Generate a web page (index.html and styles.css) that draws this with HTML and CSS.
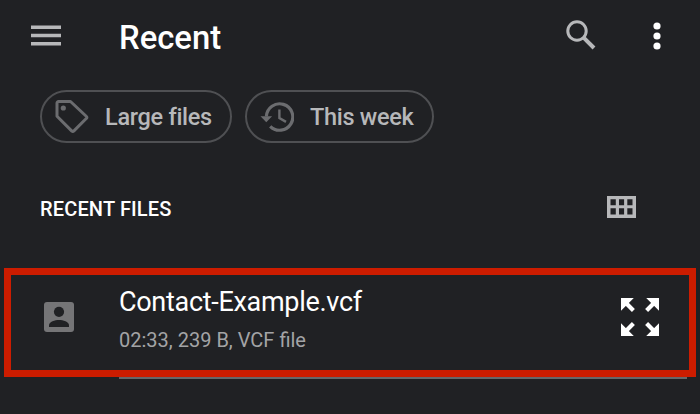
FILE: index.html
```
<!DOCTYPE html>
<html lang="en">
<head>
<meta charset="utf-8">
<title>Recent</title>
<link rel="stylesheet" href="styles.css">
</head>
<body>
<header class="bar">
  <svg class="menu" viewBox="0 0 30 21" fill="#b7b8ba"><path d="M0 .5h30v3.4H0zM0 8.8h30v3.4H0zM0 17h30v3.4H0z"/></svg>
  <h1 class="title">Recent</h1>
  <svg class="search" viewBox="0 0 30 30" fill="none" stroke="#b7b8ba"><circle cx="11" cy="11" r="9.2" stroke-width="3"/><path d="M17.6 17.6L28 28" stroke-width="4"/></svg>
  <svg class="more" viewBox="0 0 8 28" fill="#fff"><circle cx="4" cy="4" r="3.6"/><circle cx="4" cy="14" r="3.6"/><circle cx="4" cy="24" r="3.6"/></svg>
</header>
<nav class="chips">
  <div class="chip chip-large">
    <svg class="chip-icon" viewBox="-1 0 36 36"><path d="M4.5 2.5H16.5L32.5 17.5a1.2 1.2 0 0 1 0 1.8L19.7 32.1a1.2 1.2 0 0 1-1.8 0L3 17.2V4a1.5 1.5 0 0 1 1.5-1.5z" fill="none" stroke="#6b6c6f" stroke-width="3" stroke-linejoin="round"/><circle cx="9.3" cy="9" r="2.6" fill="#6b6c6f"/></svg>
    <span class="label">Large files</span>
  </div>
  <div class="chip chip-week">
    <svg class="chip-icon" viewBox="-1 0 36 36"><path d="M7.4 17.4A13.2 13.2 0 1 1 11.2 27.3" fill="none" stroke="#6b6c6f" stroke-width="3.2"/><path d="M1.5 17.2H13.1L7.3 23.2z" fill="#6b6c6f"/><path d="M20.4 10.5V19L27 22.9" fill="none" stroke="#6b6c6f" stroke-width="2.4"/></svg>
    <span class="label">This week</span>
  </div>
</nav>
<section class="section">
  <h2 class="heading">RECENT FILES</h2>
  <svg class="grid" viewBox="0 0 29 22"><path fill="#b7b8ba" fill-rule="evenodd" d="M0 0h29v22H0zM3.5 3.3v6h5.3v-6zM12 3.3v6h5.1v-6zM20.3 3.3v6h5.2v-6zM3.5 12.3v6.1h5.3v-6.1zM12 12.3v6.1h5.1v-6.1zM20.3 12.3v6.1h5.2v-6.1z"/></svg>
</section>
<main class="list">
  <article class="file">
    <svg class="contact" viewBox="0 0 30 30"><rect width="30" height="30" rx="3" fill="#757577"/><circle cx="15" cy="9.8" r="5.1" fill="#202124"/><path d="M5 25v-1.8c0-3.4 6-5.2 10-5.2s10 1.8 10 5.2V25z" fill="#202124"/></svg>
    <div class="info">
      <div class="name">Contact-Example.vcf</div>
      <div class="meta">02:33, 239 B, VCF file</div>
    </div>
    <svg class="expand" viewBox="0 0 38 38"><path fill="#fff" d="M0 0H12.8L0 12.8zM38 0V12.8L25.2 0zM0 38V25.2L12.8 38zM38 38H25.2L38 25.2z"/><path fill="none" stroke="#fff" stroke-width="4.2" d="M4 4L12.4 12.4M34 4L25.6 12.4M4 34L12.4 25.6M34 34L25.6 25.6"/></svg>
  </article>
  <div class="divider"></div>
</main>
</body>
</html>
```
FILE: styles.css
```
* { box-sizing: border-box; }
body {
  margin: 0;
  height: 414px;
  overflow: hidden;
  background: #202124;
  color: #fff;
  font-family: Roboto, "Liberation Sans", sans-serif;
}
svg { display: block; flex: none; }
h1, h2 { margin: 0; font-weight: 500; white-space: nowrap; }
.bar { display: flex; align-items: center; height: 74px; padding: 0 39px 0 31px; }
.menu { width: 30px; height: 21px; margin-top: -3px; }
.title { flex: 1; margin-top: 2px; margin-left: 58px; font-size: 32.8px; line-height: 40px; }
.search { width: 30px; height: 30px; margin-top: -5px; margin-right: 57px; }
.more { width: 8px; height: 28px; margin-top: -3px; }
.chips { display: flex; gap: 13px; padding: 16px 40px 0; }
.chip {
  display: flex;
  align-items: center;
  height: 53px;
  padding-left: 11px;
  border: 2px solid #4f5053;
  border-radius: 27px;
  white-space: nowrap;
}
.chip-large { width: 192px; }
.chip-week { width: 189px; }
.chip-icon { width: 36px; height: 36px; }
.label { margin-left: 16px; color: #b7b8ba; font-size: 23.5px; font-weight: 500; line-height: 28px; letter-spacing: -0.3px; }
.section { display: flex; justify-content: space-between; align-items: center; height: 50px; margin-top: 40px; padding: 0 64px 0 40px; }
.heading { margin-top: 1px; font-size: 20px; line-height: 24px; letter-spacing: 0.15px; }
.grid { width: 29px; height: 22px; margin-top: -3px; }
.list { padding: 35px 4px 0; }
.file {
  display: flex;
  align-items: center;
  height: 109px;
  padding: 0 30px 0 33px;
  border: 7px solid #cc1c00;
}
.contact { width: 30px; height: 30px; margin-top: -11px; }
.info { flex: 1; margin-top: -8px; margin-left: 45px; white-space: nowrap; }
.name { font-size: 27px; line-height: 34px; letter-spacing: -0.3px; }
.meta { margin-top: 9px; color: #a3a4a6; font-size: 20px; line-height: 24px; }
.expand { width: 38px; height: 38px; margin-top: -12px; }
.divider { height: 2px; margin: 0 9px 0 115px; background: #66676a; }
```
